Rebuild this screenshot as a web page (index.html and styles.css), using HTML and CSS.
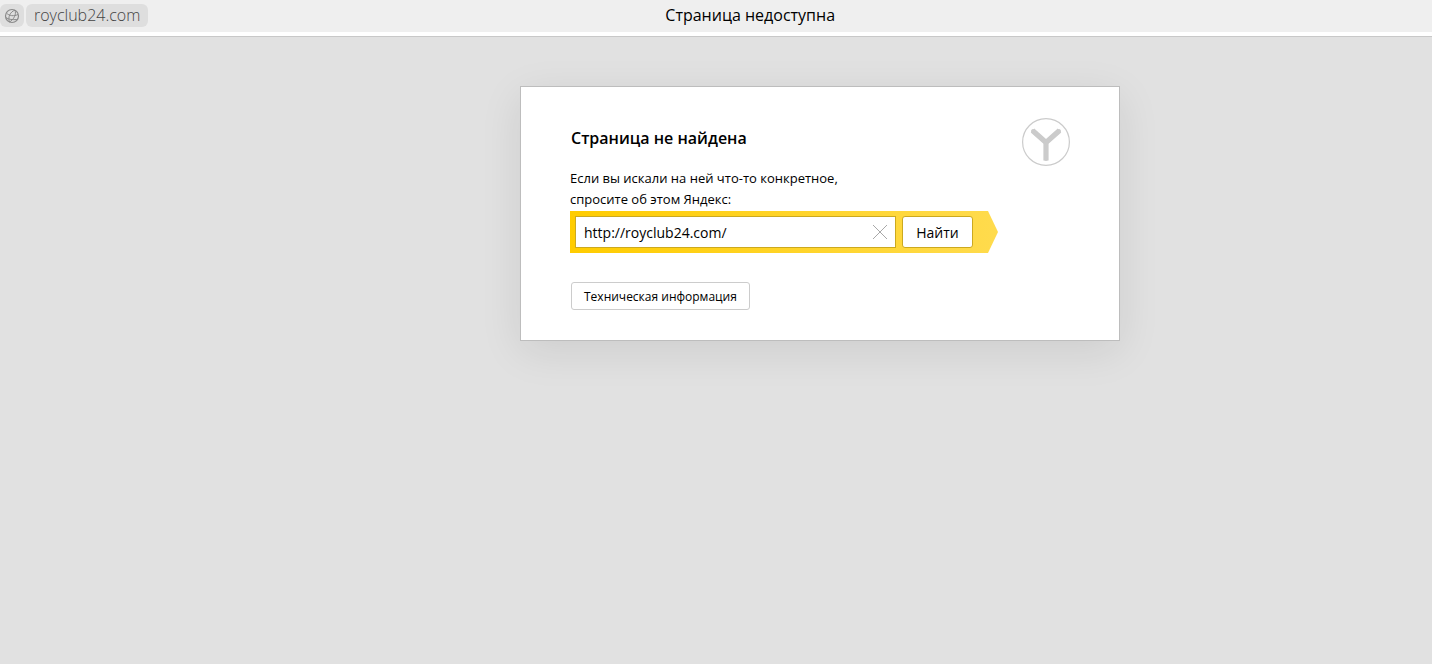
FILE: index.html
```html
<!DOCTYPE html>
<html lang="ru">
<head>
<meta charset="utf-8">
<title>Страница недоступна</title>
<link rel="stylesheet" href="styles.css">
</head>
<body>
<header class="toolbar">
  <button class="chip chip-icon" type="button" aria-label="Информация о сайте">
    <svg width="16" height="16" viewBox="0 0 16 16" fill="none" stroke="#8a8a8a" aria-hidden="true">
      <circle cx="8" cy="8" r="6.500" stroke-width="1.200"/>
      <path d="M11 2.200C6.500 3.500 3.500 9 5.500 14M11 2.200C12.500 6 10 11.500 5.500 14"/>
      <path d="M2.500 5C5 8 10 8.500 14 6.500M1.800 9.500C4.500 11.500 9 12 12.800 11.500"/>
    </svg>
  </button>
  <button class="chip chip-host" type="button">royclub24.com</button>
  <div class="page-title">Страница недоступна</div>
</header>
<main class="stage">
  <section class="card">
    <div class="card-head">
      <div>
        <h1 class="heading">Страница не найдена</h1>
        <label class="hint" for="query">Если вы искали на ней что-то конкретное,<br>спросите об этом Яндекс:</label>
      </div>
      <svg class="logo" width="48" height="48" viewBox="0 0 48 48" fill="none" stroke="#cbcbcb" aria-hidden="true">
        <circle cx="24" cy="24" r="23.400" stroke-width="1.200"/>
        <path d="M10.500 12.500L24 24.500L37.500 12.500M24 24.500V42.500" stroke-width="5.200"/>
        <path d="M11 13L24 24.500L37 13M24 24.500V41" stroke-width="4" stroke-linecap="round"/>
      </svg>
    </div>
    <form class="search">
      <div class="field">
        <input class="query" id="query" type="text" value="http://royclub24.com/">
        <button class="clear" type="reset" aria-label="Очистить">
          <svg width="14" height="14" viewBox="0 0 14 14" stroke="#a8a8a8" aria-hidden="true"><path d="M0 0L14 14M14 0L0 14"/></svg>
        </button>
      </div>
      <button class="find" type="submit">Найти</button>
    </form>
    <button class="tech" type="button">Техническая информация</button>
  </section>
</main>
</body>
</html>
```
FILE: styles.css
```css
* {
  box-sizing: border-box;
}

body {
  margin: 0;
  min-height: 100vh;
  display: flex;
  flex-direction: column;
  background: #e1e1e1;
  color: #000;
  font-family: "Open Sans", "Noto Sans", sans-serif;
}

button,
input {
  margin: 0;
  font-family: inherit;
  color: inherit;
}

.toolbar {
  display: flex;
  align-items: flex-start;
  height: 37px;
  padding-top: 4px;
  background: #efefef;
  border-bottom: 1px solid #c8c8c8;
  box-shadow: inset 0 -4px #fff;
}

.chip {
  height: 23px;
  padding: 0;
  border: 0;
  border-radius: 6px;
  background: #dedede;
  color: #444;
  font-size: 16px;
  line-height: 23px;
}

.chip-icon {
  display: flex;
  align-items: center;
  justify-content: center;
  width: 24px;
}

.chip-host {
  margin-left: 2px;
  padding: 0 8px;
  font-weight: 300;
}

.page-title {
  flex: 1;
  padding-right: 80px;
  font-size: 16px;
  line-height: 23px;
  text-align: center;
}

.stage {
  flex: 1;
  padding: 49px 0 49px 520px;
}

.card {
  max-width: 600px;
  padding: 31px 49px 30px;
  background: #fff;
  border: 1px solid #bdbdbd;
  box-shadow: 0 10px 40px rgba(0, 0, 0, 0.09);
}

.card-head {
  display: flex;
  justify-content: space-between;
  align-items: flex-start;
}

.heading {
  margin: 8px 0 18px;
  padding-left: 1px;
  font-size: 16px;
  font-weight: 600;
  line-height: 24px;
}

.hint {
  display: block;
  font-size: 13px;
  line-height: 21px;
}

.search {
  display: flex;
  gap: 6px;
  width: 428px;
  height: 42px;
  margin-top: 1px;
  padding: 5px;
  background: linear-gradient(to right, #fc0, #ffdb4d);
  clip-path: polygon(0 0, 418px 0, 100% 50%, 418px 100%, 0 100%);
}

.field {
  display: flex;
  align-items: center;
  width: 321px;
  background: #fff;
  border: 1px solid #cca91f;
}

.query {
  flex: 1;
  min-width: 0;
  padding: 0 8px;
  border: 0;
  outline: 0;
  background: transparent;
  font-size: 14px;
}

.clear {
  display: flex;
  padding: 0 8px;
  border: 0;
  background: transparent;
}

.find {
  width: 71px;
  padding: 0;
  background: #fff;
  border: 1px solid #cca91f;
  border-radius: 3px;
  font-size: 14px;
}

.tech {
  display: block;
  height: 28px;
  margin: 29px 0 0 1px;
  padding: 0 12px;
  background: #fff;
  border: 1px solid #ccc;
  border-radius: 3px;
  font-size: 12px;
}
```
